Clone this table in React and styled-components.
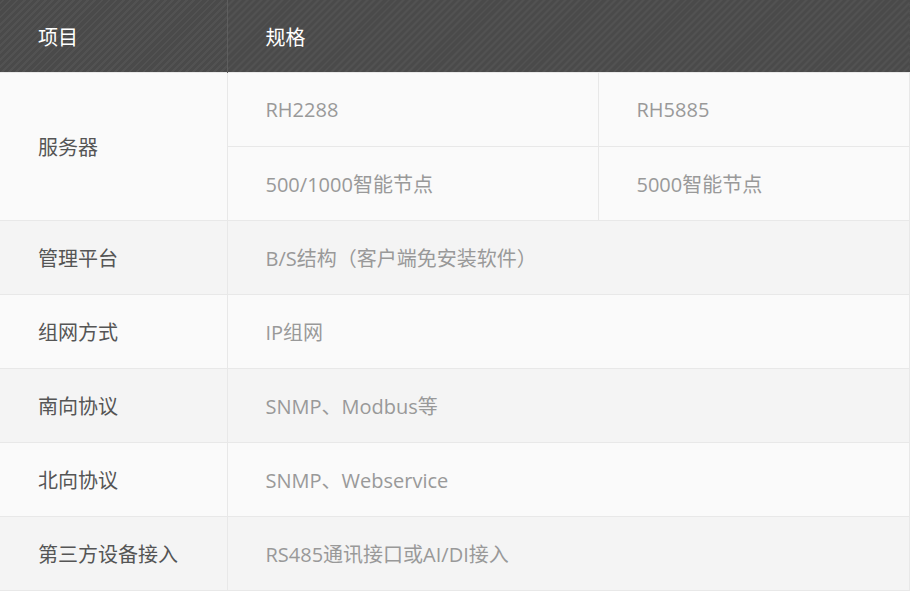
import styled, { createGlobalStyle } from "styled-components";

const GlobalStyle = createGlobalStyle`
  html, body {
    margin: 0;
    padding: 0;
    background: #fff;
  }
  body {
    font-family: "Open Sans", "Noto Sans CJK SC", sans-serif;
  }
`;

const rows = [
  { label: "管理平台", value: "B/S结构（客户端免安装软件）" },
  { label: "组网方式", value: "IP组网" },
  { label: "南向协议", value: "SNMP、Modbus等" },
  { label: "北向协议", value: "SNMP、Webservice" },
  { label: "第三方设备接入", value: "RS485通讯接口或AI/DI接入" },
];

const App = () => (
  <>
    <GlobalStyle />
    <Table>
      <colgroup>
        <col style={{ width: 227 }} />
        <col style={{ width: 371 }} />
        <col />
      </colgroup>
      <thead>
        <tr>
          <HeadCell>项目</HeadCell>
          <HeadCell colSpan={2}>规格</HeadCell>
        </tr>
      </thead>
      <tbody>
        <Row $alt={false}>
          <Label rowSpan={2}>服务器</Label>
          <Value>RH2288</Value>
          <Value>RH5885</Value>
        </Row>
        <Row $alt={false}>
          <Value>500/1000智能节点</Value>
          <Value>5000智能节点</Value>
        </Row>
        {rows.map((r, i) => (
          <Row key={r.label} $alt={i % 2 === 0}>
            <Label>{r.label}</Label>
            <Value colSpan={2}>{r.value}</Value>
          </Row>
        ))}
      </tbody>
    </Table>
  </>
);

const Table = styled.table`
  width: 910px;
  border-collapse: collapse;
  table-layout: fixed;
  font-size: 20px;
`;

const HeadCell = styled.th`
  height: 72px;
  padding: 0 0 0 38px;
  text-align: left;
  font-weight: normal;
  color: #fff;
  background-color: #4a4a4a;
  background-image: repeating-linear-gradient(
    -45deg,
    #4a4a4a 0px,
    #4a4a4a 3px,
    #525252 3px,
    #525252 5px
  );
  border: none;
  border-left: 1px solid #5e5e5e;
  &:first-child {
    border-left: none;
  }
`;

const Row = styled.tr`
  background: ${({ $alt }) => ($alt ? "#f4f4f4" : "#fafafa")};
`;

const Label = styled.td`
  height: 73px;
  padding: 0 0 0 38px;
  color: #555;
  border: 1px solid #e8e8e8;
  border-left: none;
`;

const Value = styled.td`
  height: 73px;
  padding: 0 0 0 38px;
  color: #999;
  border: 1px solid #e8e8e8;
`;

export default App;
